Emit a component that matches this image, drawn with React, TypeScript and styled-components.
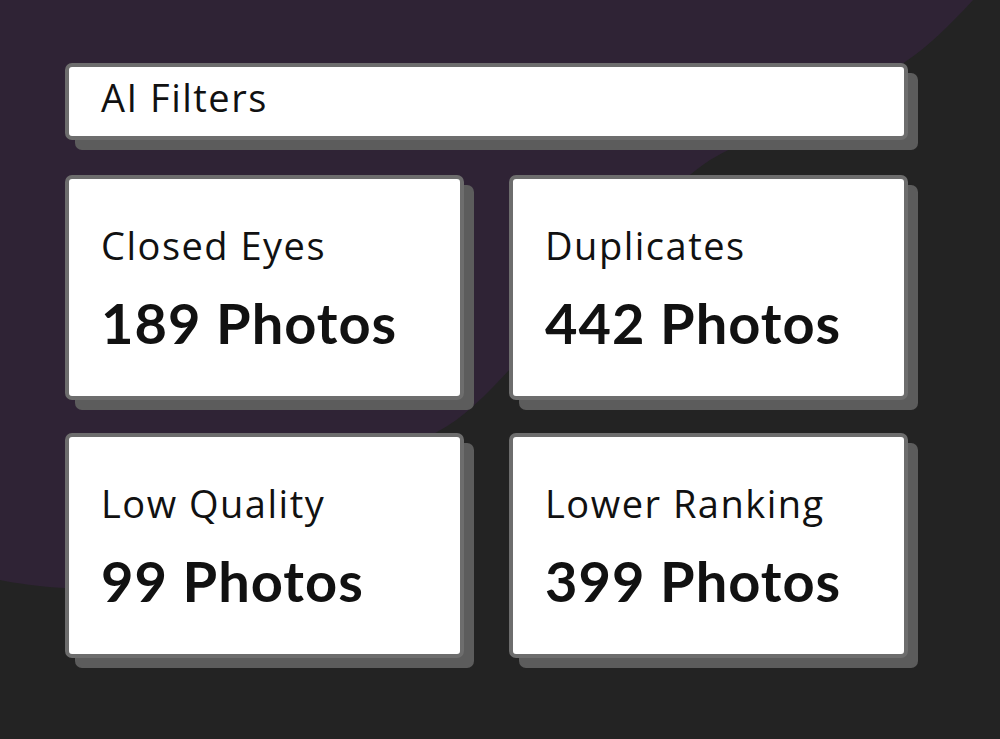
import React from 'react';
import styled, { createGlobalStyle } from 'styled-components';

const GlobalStyle = createGlobalStyle`
    html, body {
        margin: 0;
        padding: 0;
        background: #232323;
    }
    * {
        box-sizing: border-box;
    }
`;

const Page = styled.div`
    position: relative;
    width: 100%;
    min-height: 100vh;
    overflow: hidden;
    background: #232323;
    font-family: "Open Sans", Lato, sans-serif;
    color: #111111;
`;

// purple blob in the top left corner, sits under everything
const Backdrop = styled.svg`
    position: absolute;
    top: 0;
    left: 0;
    width: 1000px;
    height: 739px;
    z-index: 0;
`;

const Panel = styled.div`
    position: relative;
    z-index: 1;
    width: 843px;
    margin-left: 65px;
    padding-top: 63px;
    display: flex;
    flex-direction: column;
    gap: 35px;
`;

const Box = styled.div`
    background: #ffffff;
    border: 4px solid #6d6d6d;
    border-radius: 7px;
    box-shadow: 10px 10px 0 #5c5c5c;
`;

const Header = styled(Box)`
    height: 77px;
    padding: 11px 32px 0;
    font-size: 38px;
    line-height: 1;
    letter-spacing: 1.5px;
`;

const Grid = styled.div`
    display: grid;
    grid-template-columns: 1fr 1fr;
    column-gap: 45px;
    row-gap: 33px;
`;

const Card = styled(Box)`
    height: 225px;
    padding: 47px 32px 0;
    display: flex;
    flex-direction: column;
    gap: 31px;
`;

const Label = styled.div`
    font-size: 38px;
    line-height: 1;
    font-weight: 400;
    letter-spacing: 1.5px;
`;

const Count = styled.div`
    font-family: Lato, "Open Sans", sans-serif;
    font-size: 56px;
    line-height: 1;
    font-weight: 700;
    letter-spacing: 1px;
`;

const FILTERS = [
    { id: 'closed', label: 'Closed Eyes', count: 189 },
    { id: 'dupes', label: 'Duplicates', count: 442 },
    { id: 'quality', label: 'Low Quality', count: 99 },
    { id: 'ranking', label: 'Lower Ranking', count: 399 },
];

export default function App() {
    return (
        <Page>
            <GlobalStyle />
            <Backdrop viewBox="0 0 1000 739" aria-hidden="true">
                <path
                    d="M0 0 H973 C 950 25, 930 45, 905 62 C 850 100, 760 130, 710 160 C 650 200, 580 290, 530 347 C 500 380, 470 415, 437 432 C 330 500, 160 590, 65 588 C 40 587, 15 583, 0 580 Z"
                    fill="#2f2335"
                />
            </Backdrop>
            <Panel>
                <Header>AI Filters</Header>
                <Grid>
                    {FILTERS.map((f) => (
                        <Card key={f.id}>
                            <Label>{f.label}</Label>
                            <Count>{f.count} Photos</Count>
                        </Card>
                    ))}
                </Grid>
            </Panel>
        </Page>
    );
}
